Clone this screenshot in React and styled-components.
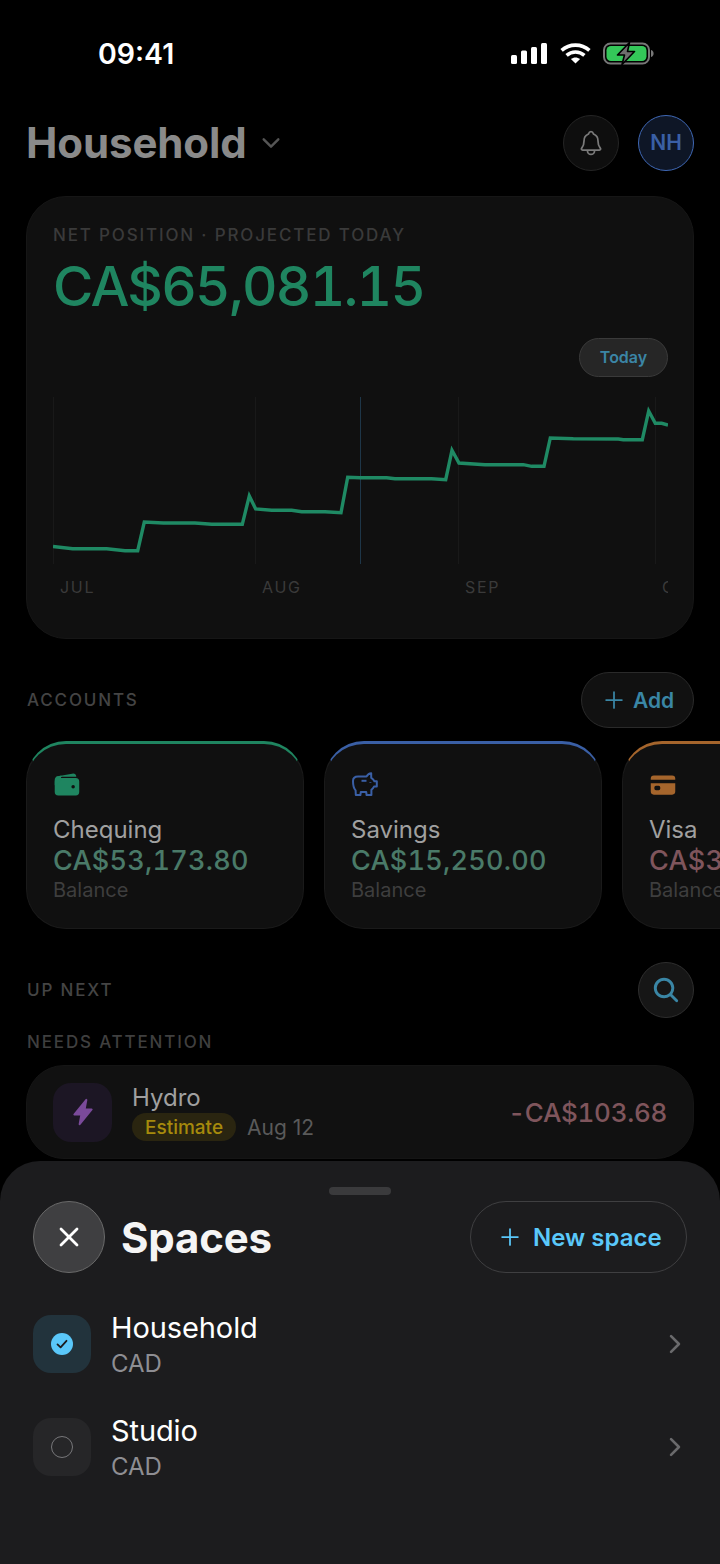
import React from "react";
import styled, { createGlobalStyle } from "styled-components";
import {
  IoWallet,
  IoCard,
  IoFlash,
  IoSearch,
  IoNotificationsOutline,
  IoChevronDown,
  IoAdd,
  IoChevronForward,
} from "react-icons/io5";

const GlobalStyle = createGlobalStyle`
  html, body {
    margin: 0;
    padding: 0;
    background: #000;
  }
  * {
    box-sizing: border-box;
  }
`;

const Screen = styled.div`
  position: relative;
  width: 720px;
  height: 1564px;
  overflow: hidden;
  background: #000;
  font-family: Inter, "Liberation Sans", sans-serif;
`;

const StatusBar = styled.div`
  display: flex;
  align-items: center;
  justify-content: space-between;
  height: 106px;
  padding: 0 66px 0 98px;
`;

const Clock = styled.div`
  font-size: 28.5px;
  font-weight: 600;
  color: #fff;
`;

const StatusIcons = styled.div`
  display: flex;
  align-items: center;
  gap: 12.5px;
`;

const Header = styled.div`
  display: flex;
  align-items: center;
  padding: 9px 26px 0 26px;
  height: 64px;
`;

const Title = styled.div`
  font-size: 42px;
  font-weight: 700;
  letter-spacing: -0.1px;
  color: #8a8a8a;
`;

const TitleChevron = styled.div`
  display: flex;
  margin-left: 11px;
  margin-right: auto;
  color: #555;
  font-size: 26px;
`;

const RoundButton = styled.div`
  display: flex;
  align-items: center;
  justify-content: center;
  width: 56px;
  height: 56px;
  margin-left: ${(props) => props.$gap || 0}px;
  border-radius: 50%;
  background: ${(props) => props.$bg || "#0e0e0e"};
  border: ${(props) => props.$lineWidth || 1}px solid ${(props) => props.$line || "#242424"};
  color: ${(props) => props.$color || "#7a7a7a"};
  font-size: ${(props) => props.$size || 28}px;
  font-weight: 600;
`;

const NetCard = styled.div`
  margin: 26px 26px 0;
  height: 443px;
  padding: 27px 25px 0 26px;
  background: #101010;
  border: 1px solid #161616;
  border-radius: 40px;
`;

const Eyebrow = styled.div`
  font-size: 17px;
  line-height: 22px;
  font-weight: 500;
  letter-spacing: 1.84px;
  color: ${(props) => props.$color || "#3a3a3a"};
`;

const NetAmount = styled.div`
  margin-top: 7px;
  font-size: 55px;
  line-height: 66px;
  font-weight: 500;
  letter-spacing: -1.75px;
  font-variant-numeric: tabular-nums;
  color: #1f8560;
`;

const TodayRow = styled.div`
  display: flex;
  justify-content: flex-end;
  margin-top: 19px;
`;

const TodayPill = styled.div`
  display: flex;
  align-items: center;
  justify-content: center;
  width: 89px;
  height: 39px;
  padding-bottom: 1px;
  border-radius: 20px;
  background: #262626;
  border: 1px solid #3a3a3a;
  font-size: 16px;
  font-weight: 600;
  color: #3b85a5;
`;

const ChartSvg = styled.svg`
  display: block;
  margin-top: 20px;
`;

const Months = styled.div`
  display: flex;
  width: 615px;
  height: 24px;
  margin-top: 11px;
  overflow: hidden;
`;

const Month = styled.div`
  flex: 0 0 ${(props) => props.$span}px;
  padding-left: 7px;
  font-size: 16px;
  line-height: 24px;
  letter-spacing: 1.7px;
  color: #3a3a3a;
`;

const SectionRow = styled.div`
  display: flex;
  align-items: center;
  justify-content: space-between;
  height: ${(props) => props.$height || 56}px;
  margin-top: ${(props) => props.$top}px;
  padding: 0 26px 0 27px;
`;

const AddPill = styled.div`
  display: flex;
  align-items: center;
  gap: 5px;
  height: 56px;
  width: 113px;
  padding-left: 18px;
  border-radius: 28px;
  background: #111;
  border: 1px solid #2a2a2a;
  color: #3a86a5;
  font-size: 21px;
  font-weight: 600;
`;

const AccountRail = styled.div`
  display: flex;
  gap: 20px;
  width: 720px;
  margin-top: 13px;
  padding-left: 26px;
  overflow: hidden;
`;

const AccountCard = styled.div`
  flex: 0 0 278px;
  height: 188px;
  padding: 27px 0 0 26px;
  background: #101010;
  border: 1px solid #1a1a1a;
  border-top: 3px solid ${(props) => props.$accent};
  border-radius: 40px;
`;

const AccountIcon = styled.div`
  display: flex;
  height: 28px;
  font-size: 28px;
  color: ${(props) => props.$accent};
`;

const AccountName = styled.div`
  margin-top: 15px;
  font-size: 24px;
  line-height: 31px;
  color: #a0a0a0;
`;

const AccountAmount = styled.div`
  font-size: 27px;
  line-height: 32px;
  font-weight: 500;
  letter-spacing: 0.27px;
  font-variant-numeric: tabular-nums;
  white-space: nowrap;
  color: ${(props) => props.$color};
`;

const AccountNote = styled.div`
  font-size: 20px;
  line-height: 27px;
  color: #3e3e3e;
`;

const AttentionRow = styled.div`
  display: flex;
  align-items: center;
  height: 94px;
  margin: 12px 26px 0;
  padding: 0 26px;
  background: #111;
  border: 1px solid #151515;
  border-radius: 38px;
`;

const BoltTile = styled.div`
  display: flex;
  align-items: center;
  justify-content: center;
  width: 59px;
  height: 59px;
  border-radius: 18px;
  background: #1c1624;
  color: #7a4a9a;
  font-size: 28px;
`;

const AttentionText = styled.div`
  flex: 1;
  margin-left: 20px;
`;

const AttentionName = styled.div`
  font-size: 24px;
  line-height: 30px;
  color: #a0a0a0;
`;

const AttentionMeta = styled.div`
  display: flex;
  align-items: center;
  gap: 11px;
`;

const EstimatePill = styled.div`
  padding: 0 13px;
  height: 28px;
  border-radius: 14px;
  background: #2a2510;
  font-size: 19px;
  line-height: 29px;
  font-weight: 500;
  color: #a68a0c;
`;

const AttentionDate = styled.div`
  font-size: 21px;
  color: #5a5a5a;
`;

const AttentionAmount = styled.div`
  font-size: 26px;
  font-weight: 500;
  letter-spacing: -0.3px;
  font-variant-numeric: tabular-nums;
  color: #7f555c;
`;

const Sheet = styled.div`
  position: absolute;
  left: 0;
  right: 0;
  bottom: 0;
  height: 403px;
  padding: 26px 33px 0;
  background: #1c1c1e;
  border-radius: 40px 40px 0 0;
`;

const Handle = styled.div`
  width: 62px;
  height: 8px;
  margin: 0 auto;
  border-radius: 4px;
  background: #3a3a3c;
`;

const SheetHeader = styled.div`
  display: flex;
  align-items: center;
  margin-top: 6px;
`;

const CloseButton = styled.div`
  display: flex;
  align-items: center;
  justify-content: center;
  width: 72px;
  height: 72px;
  border-radius: 50%;
  background: #3f3f41;
  border: 1px solid #6a6a6a;
`;

const SheetTitle = styled.div`
  flex: 1;
  margin-left: 16px;
  font-size: 42px;
  font-weight: 700;
  letter-spacing: -0.2px;
  color: #f5f5f5;
`;

const NewSpace = styled.div`
  display: flex;
  align-items: center;
  gap: 9px;
  width: 217px;
  height: 72px;
  padding-left: 25px;
  border-radius: 36px;
  border: 1px solid #3f3f41;
  color: #5ac8fa;
  font-size: 24px;
  font-weight: 600;
`;

const SpaceList = styled.div`
  display: flex;
  flex-direction: column;
  gap: 45px;
  margin-top: 42px;
`;

const SpaceRow = styled.div`
  display: flex;
  align-items: center;
  height: 58px;
`;

const SpaceTile = styled.div`
  display: flex;
  align-items: center;
  justify-content: center;
  width: 58px;
  height: 58px;
  border-radius: 18px;
  background: ${(props) => (props.$active ? "#22333c" : "#262628")};
`;

const CheckDot = styled.div`
  display: flex;
  align-items: center;
  justify-content: center;
  width: 22px;
  height: 22px;
  border-radius: 50%;
  background: #5ac8fa;
`;

const EmptyDot = styled.div`
  width: 22px;
  height: 22px;
  border-radius: 50%;
  border: 1.5px solid #77777a;
`;

const SpaceText = styled.div`
  flex: 1;
  margin-left: 20px;
  padding-top: 3px;
`;

const SpaceName = styled.div`
  font-size: 29px;
  line-height: 36px;
  letter-spacing: -0.1px;
  color: #fff;
`;

const SpaceCurrency = styled.div`
  margin-top: 1px;
  font-size: 24px;
  line-height: 34px;
  color: #8e8e93;
`;

const SpaceChevron = styled.div`
  display: flex;
  margin-right: -2px;
  color: #6a6a6c;
  font-size: 28px;
`;

const linePoints =
  "0,149.5 19.7,151.7 53.7,151.7 72,153.7 84.7,153.7 91.3,125 110.3,126 142,126 158.7,127.3 189.3,127.3 196.3,99 202.7,112 218.7,113.3 238.7,113.3 248.7,114.7 272,114.7 288,115.7 294.7,80.3 307,80.7 333.7,80.7 342,81.7 378.7,81.7 392.7,82.7 399,53.3 406,66 432,67.7 470.3,67.7 478.7,69.3 491,69.3 497.3,41 520.3,41.7 565.3,42 570.3,42.7 589.3,42.7 595.7,14 602.3,26.3 608.7,26.3 615,28";

const gridLines = [
  { x: 0.5, color: "#191919" },
  { x: 202.5, color: "#191919" },
  { x: 307.5, color: "#1e3648" },
  { x: 405.5, color: "#191919" },
  { x: 602.5, color: "#191919" },
];

const months = [
  { label: "JUL", span: 202 },
  { label: "AUG", span: 203 },
  { label: "SEP", span: 197 },
  { label: "OCT", span: 60 },
];

function Signal() {
  return (
    <svg width="36" height="21" viewBox="0 0 36 21" fill="#fff">
      <rect x="0" y="12" width="6" height="9" rx="1.5" />
      <rect x="10" y="7.5" width="6" height="13.5" rx="1.5" />
      <rect x="20" y="4" width="6" height="17" rx="1.5" />
      <rect x="30" y="0" width="6" height="21" rx="1.5" />
    </svg>
  );
}

function Wifi() {
  return (
    <svg width="31" height="21" viewBox="0 0 31 21" fill="none" stroke="#fff" strokeWidth="3.6">
      <path d="M1.6 7.4 C9.4 0.4 21.6 0.4 29.4 7.4" />
      <path d="M6.6 12.4 C11.8 7.9 19.2 7.9 24.4 12.4" />
      <path d="M15.5 20.6 L10.9 16 C13.6 13.9 17.4 13.9 20.1 16 Z" fill="#fff" stroke="none" />
    </svg>
  );
}

function Battery() {
  return (
    <svg width="51" height="23" viewBox="0 0 51 23" fill="none">
      <rect x="1" y="1.5" width="45" height="20" rx="6.5" stroke="#777" strokeWidth="2" />
      <rect x="3.5" y="4" width="40" height="15" rx="4.5" fill="#34c759" />
      <path d="M48 8 C50 8.6 50.6 10 50.6 11.5 C50.6 13 50 14.4 48 15 Z" fill="#777" />
      <path
        d="M26.5 0.5 L14.5 13 L21.5 13 L19 22.5 L31.5 9.5 L24.5 9.5 Z"
        fill="#6e6e6e"
        stroke="#000"
        strokeWidth="1.6"
        strokeLinejoin="round"
      />
    </svg>
  );
}

function Piggy() {
  return (
    <svg width="27" height="26" viewBox="0 0 27 26" fill="none" stroke="currentColor" strokeWidth="2" strokeLinejoin="round">
      <path d="M2 10 C2 7 4 5.5 7 5.5 L15.5 5.5 C16.5 3.8 18.2 2.4 20.2 2.2 L20.2 6.8 C21.8 7.8 22.8 9 23.4 10.2 L25.8 10.2 L25.8 15.6 L23 15.6 C22.4 16.8 21.4 18 20.4 18.8 L20.4 24 L15.6 24 L15.2 21 L9.8 21 L9.4 24 L4.8 24 L4.6 19.4 C2.8 17.6 2 14 2 10 Z" />
      <path d="M10.5 9.8 L15.5 9.8" />
      <path d="M19.4 11.2 L19.4 11.9" />
    </svg>
  );
}

function Check() {
  return (
    <svg width="14" height="14" viewBox="0 0 14 14" fill="none" stroke="#1c1c1e" strokeWidth="1.8" strokeLinecap="round" strokeLinejoin="round">
      <path d="M2.5 7.4 L5.6 10.4 L11.5 3.8" />
    </svg>
  );
}

function CloseMark() {
  return (
    <svg width="20" height="20" viewBox="0 0 20 20" fill="none" stroke="#fff" strokeWidth="2.8" strokeLinecap="round">
      <path d="M2 2 L18 18" />
      <path d="M18 2 L2 18" />
    </svg>
  );
}

const accounts = [
  {
    name: "Chequing",
    amount: "CA$53,173.80",
    accent: "#1f8560",
    color: "#4a7a68",
    icon: <IoWallet />,
  },
  {
    name: "Savings",
    amount: "CA$15,250.00",
    accent: "#3a5fa5",
    color: "#4a7a68",
    icon: <Piggy />,
  },
  {
    name: "Visa",
    amount: "CA$3,412.09",
    accent: "#a5652c",
    color: "#7f555c",
    icon: <IoCard />,
  },
];

const spaces = [
  { name: "Household", active: true },
  { name: "Studio", active: false },
];

export default function App() {
  return (
    <Screen>
      <GlobalStyle />
      <StatusBar>
        <Clock>09:41</Clock>
        <StatusIcons>
          <Signal />
          <Wifi />
          <Battery />
        </StatusIcons>
      </StatusBar>

      <Header>
        <Title>Household</Title>
        <TitleChevron>
          <IoChevronDown />
        </TitleChevron>
        <RoundButton>
          <IoNotificationsOutline />
        </RoundButton>
        <RoundButton $gap={19} $bg="#0e1626" $line="#3f68b5" $lineWidth={1.5} $color="#3a5fa5" $size={21}>
          NH
        </RoundButton>
      </Header>

      <NetCard>
        <Eyebrow>NET POSITION · PROJECTED TODAY</Eyebrow>
        <NetAmount>CA$65,081.15</NetAmount>
        <TodayRow>
          <TodayPill>Today</TodayPill>
        </TodayRow>
        <ChartSvg width="615" height="167" viewBox="0 0 615 167" fill="none">
          {gridLines.map((line) => (
            <line key={line.x} x1={line.x} x2={line.x} y1="0" y2="167" stroke={line.color} />
          ))}
          <polyline points={linePoints} stroke="#1f8a64" strokeWidth="3.4" strokeLinejoin="miter" />
        </ChartSvg>
        <Months>
          {months.map((month) => (
            <Month key={month.label} $span={month.span}>
              {month.label}
            </Month>
          ))}
        </Months>
      </NetCard>

      <SectionRow $top={33}>
        <Eyebrow $color="#444">ACCOUNTS</Eyebrow>
        <AddPill>
          <IoAdd size={28} />
          Add
        </AddPill>
      </SectionRow>

      <AccountRail>
        {accounts.map((account) => (
          <AccountCard key={account.name} $accent={account.accent}>
            <AccountIcon $accent={account.accent}>{account.icon}</AccountIcon>
            <AccountName>{account.name}</AccountName>
            <AccountAmount $color={account.color}>{account.amount}</AccountAmount>
            <AccountNote>Balance</AccountNote>
          </AccountCard>
        ))}
      </AccountRail>

      <SectionRow $top={33}>
        <Eyebrow $color="#444">UP NEXT</Eyebrow>
        <RoundButton $bg="#161616" $line="#2e2e2e" $color="#3a86a5" $size={30}>
          <IoSearch />
        </RoundButton>
      </SectionRow>

      <SectionRow $height={22} $top={13}>
        <Eyebrow $color="#3f3f3f">NEEDS ATTENTION</Eyebrow>
      </SectionRow>

      <AttentionRow>
        <BoltTile>
          <IoFlash />
        </BoltTile>
        <AttentionText>
          <AttentionName>Hydro</AttentionName>
          <AttentionMeta>
            <EstimatePill>Estimate</EstimatePill>
            <AttentionDate>Aug 12</AttentionDate>
          </AttentionMeta>
        </AttentionText>
        <AttentionAmount>-CA$103.68</AttentionAmount>
      </AttentionRow>

      <Sheet>
        <Handle />
        <SheetHeader>
          <CloseButton>
            <CloseMark />
          </CloseButton>
          <SheetTitle>Spaces</SheetTitle>
          <NewSpace>
            <IoAdd size={28} />
            New space
          </NewSpace>
        </SheetHeader>
        <SpaceList>
          {spaces.map((space) => (
            <SpaceRow key={space.name}>
              <SpaceTile $active={space.active}>
                {space.active ? (
                  <CheckDot>
                    <Check />
                  </CheckDot>
                ) : (
                  <EmptyDot />
                )}
              </SpaceTile>
              <SpaceText>
                <SpaceName>{space.name}</SpaceName>
                <SpaceCurrency>CAD</SpaceCurrency>
              </SpaceText>
              <SpaceChevron>
                <IoChevronForward />
              </SpaceChevron>
            </SpaceRow>
          ))}
        </SpaceList>
      </Sheet>
    </Screen>
  );
}
